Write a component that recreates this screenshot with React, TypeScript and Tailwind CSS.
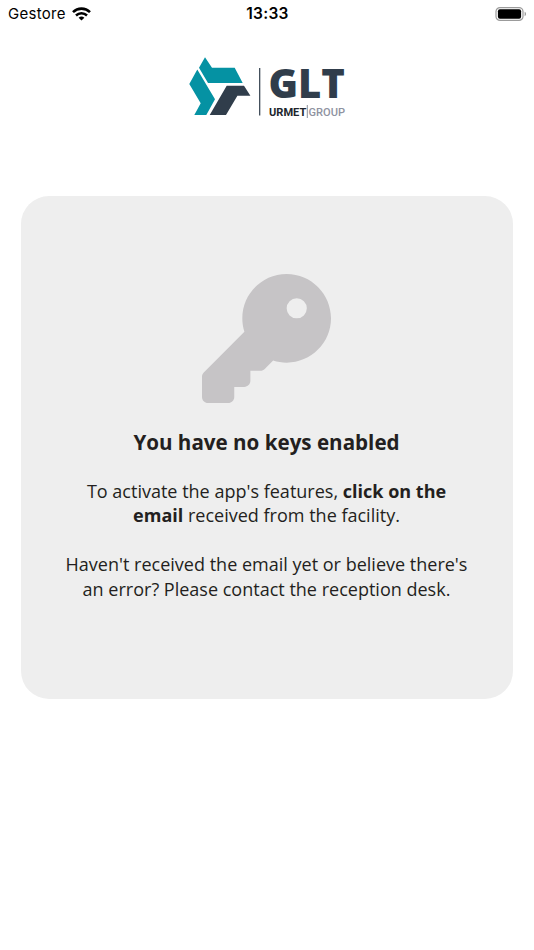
import React from 'react';

const WifiIcon: React.FC = () => (
  <svg viewBox="0 0 19 14" className="h-[14px] w-[19px]" fill="none" stroke="#000">
    <path d="M1 5.1a12.2 12.2 0 0 1 17 0" strokeWidth="2.6" />
    <path d="M4 8.5a7.9 7.9 0 0 1 11 0" strokeWidth="2.5" />
    <path d="M9.5 13.6 6.6 10.8a4.2 4.2 0 0 1 5.8 0z" fill="#000" stroke="none" />
  </svg>
);

const BatteryIcon: React.FC = () => (
  <svg viewBox="0 0 32 14" className="h-[14px] w-[32px]">
    <rect x="1" y="0.6" width="27" height="12.8" rx="4" fill="none" stroke="#9b9b9b" strokeWidth="1.2" />
    <rect x="2.9" y="2.2" width="23.2" height="9.6" rx="2" fill="#000" />
    <path d="M29.6 4.8c1.9.7 1.9 3.7 0 4.4z" fill="#9b9b9b" />
  </svg>
);

const Logo: React.FC = () => (
  <svg viewBox="189 56 157 62" className="h-[62px] w-[157px]">
    <path d="M205 57.2 212 67.7h22.7l8 15.3H208l-9-15.3z" fill="#0592a3" />
    <path d="M197.3 69.6 189.3 84l11.4 19.3-6.4 11.8h12l8.7-15.8z" fill="#0592a3" />
    <path d="M226.7 85.7H244l6.4 10h-13L226 115.1h-16.3z" fill="#303d4b" />
    <path d="M259.7 68v47.5" stroke="#303d4b" strokeWidth="1.2" />
    <text
      x="268.5"
      y="98.3"
      fontFamily="Open Sans"
      fontWeight="800"
      fontSize="41.5"
      textLength="76.5"
      lengthAdjust="spacingAndGlyphs"
      fill="#303d4b"
    >
      GLT
    </text>
    <text x="269" y="115.6" fontFamily="Roboto" fontWeight="700" fontSize="11.7" textLength="37.3" lengthAdjust="spacingAndGlyphs" fill="#20252c">
      URMET
    </text>
    <path d="M307.3 105v13" stroke="#6f7480" strokeWidth="0.8" />
    <text x="308.5" y="115.6" fontFamily="Roboto" fontWeight="500" fontSize="11.7" textLength="36.5" lengthAdjust="spacingAndGlyphs" fill="#8f93a1">
      GROUP
    </text>
  </svg>
);

const KeyIcon: React.FC = () => (
  <svg viewBox="0 0 512 512" className="mr-px h-[129px] w-[129px]" fill="#c6c4c6">
    <path d="M336 352c97.2 0 176-78.8 176-176S433.2 0 336 0S160 78.8 160 176c0 18.7 2.9 36.8 8.3 53.7L7 391c-4.5 4.5-7 10.6-7 17l0 80c0 13.3 10.7 24 24 24l80 0c13.3 0 24-10.7 24-24l0-40 40 0c13.3 0 24-10.7 24-24l0-40 40 0c6.4 0 12.5-2.5 17-7l33.3-33.3c16.9 5.4 35 8.3 53.7 8.3zM376 96a40 40 0 1 1 0 80 40 40 0 1 1 0-80z" />
  </svg>
);

const App: React.FC = () => {
  return (
    <div className="h-[950px] w-full overflow-hidden bg-white font-['Open_Sans',sans-serif] text-[#231f20]">
      {/* Status bar */}
      <header className="grid h-7 grid-cols-3 items-center pl-[8px] pr-[7px] font-['Inter',sans-serif] text-[15px] text-black">
        <div className="flex items-center gap-[6px]">
          <span className="tracking-[0.3px]">Gestore</span>
          <WifiIcon />
        </div>
        <span className="text-center text-[15.5px] font-semibold tracking-[0.3px]">13:33</span>
        <div className="flex justify-end">
          <BatteryIcon />
        </div>
      </header>
      <div className="mt-7 flex justify-center">
        <Logo />
      </div>
      {/* Empty state */}
      <main className="mx-[21px] mt-[78px] flex h-[503px] flex-col items-center rounded-[28px] bg-[#eeeeee] pt-[77.5px] text-center">
        <KeyIcon />
        <h1 className="mt-[24.5px] mr-px text-[20.6px] leading-[30px] font-bold whitespace-nowrap">You have no keys enabled</h1>
        <p className="mt-[21.5px] mr-px text-[18.03px] leading-[24.5px] whitespace-nowrap">
          To activate the app's features, <b>click on the</b>
          <br />
          <b>email</b> received from the facility.
        </p>
        <p className="mt-[24.5px] mr-px text-[18.03px] leading-[24.5px] whitespace-nowrap">
          Haven't received the email yet or believe there's
          <br />
          an error? Please contact the reception desk.
        </p>
      </main>
    </div>
  );
};

export default App;
